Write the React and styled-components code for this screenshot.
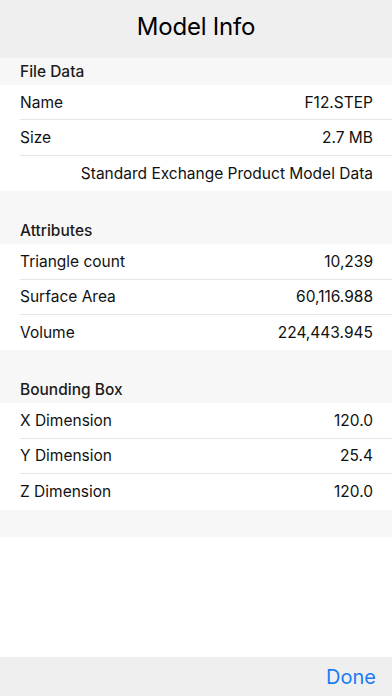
import styled, { createGlobalStyle } from 'styled-components';

const GlobalStyle = createGlobalStyle`
  html, body {
    margin: 0;
    padding: 0;
    background: #ffffff;
    font-family: Inter, 'Noto Sans', sans-serif;
    -webkit-font-smoothing: antialiased;
  }
`;

const Screen = styled.div`
  width: 392px;
  height: 696px;
  display: flex;
  flex-direction: column;
  background: #ffffff;
  overflow: hidden;
`;

const NavBar = styled.header`
  height: 58px;
  flex: none;
  display: flex;
  align-items: center;
  justify-content: center;
  background: #efefef;
`;

const Title = styled.h1`
  margin: 0 0 6px;
  font-size: 24px;
  font-weight: 400;
  color: #000;
  letter-spacing: -0.2px;
`;

const Content = styled.main`
  flex: 1;
`;

const SectionHeader = styled.div`
  display: flex;
  align-items: flex-end;
  height: ${(p) => (p.$first ? '27px' : '53px')};
  padding: 0 20px 4px;
  box-sizing: border-box;
  background: #f7f7f7;
  font-size: 15.5px;
  font-weight: 500;
  color: #1c1c1c;
`;

const SectionFooter = styled.div`
  height: 27px;
  background: #f7f7f7;
`;

const Row = styled.div`
  height: 35.4px;
  display: flex;
  align-items: center;
  justify-content: ${(p) => (p.$solo ? 'flex-end' : 'space-between')};
  margin-left: 20px;
  padding-right: 19px;
  font-size: 15.5px;
  color: #111;
  box-sizing: border-box;

  &:not(:last-child) {
    border-bottom: 1px solid #e6e6e6;
  }
`;

const Toolbar = styled.footer`
  height: 39px;
  flex: none;
  display: flex;
  align-items: center;
  justify-content: flex-end;
  padding: 0 16px;
  background: #efefef;
`;

const DoneButton = styled.button`
  border: none;
  background: none;
  padding: 0;
  font-family: inherit;
  font-size: 20px;
  color: #1a7cf4;
`;

const sections = [
  {
    title: 'File Data',
    rows: [
      ['Name', 'F12.STEP'],
      ['Size', '2.7 MB'],
      [null, 'Standard Exchange Product Model Data'],
    ],
  },
  {
    title: 'Attributes',
    rows: [
      ['Triangle count', '10,239'],
      ['Surface Area', '60,116.988'],
      ['Volume', '224,443.945'],
    ],
  },
  {
    title: 'Bounding Box',
    rows: [
      ['X Dimension', '120.0'],
      ['Y Dimension', '25.4'],
      ['Z Dimension', '120.0'],
    ],
  },
];

export default function App() {
  return (
    <>
      <GlobalStyle />
      <Screen>
        <NavBar>
          <Title>Model Info</Title>
        </NavBar>
        <Content>
          {sections.map((section, i) => (
            <section key={section.title}>
              <SectionHeader $first={i === 0}>{section.title}</SectionHeader>
              <div>
                {section.rows.map(([label, value]) => (
                  <Row key={value} $solo={!label}>
                    {label && <span>{label}</span>}
                    <span>{value}</span>
                  </Row>
                ))}
              </div>
            </section>
          ))}
          <SectionFooter />
        </Content>
        <Toolbar>
          <DoneButton>Done</DoneButton>
        </Toolbar>
      </Screen>
    </>
  );
}
